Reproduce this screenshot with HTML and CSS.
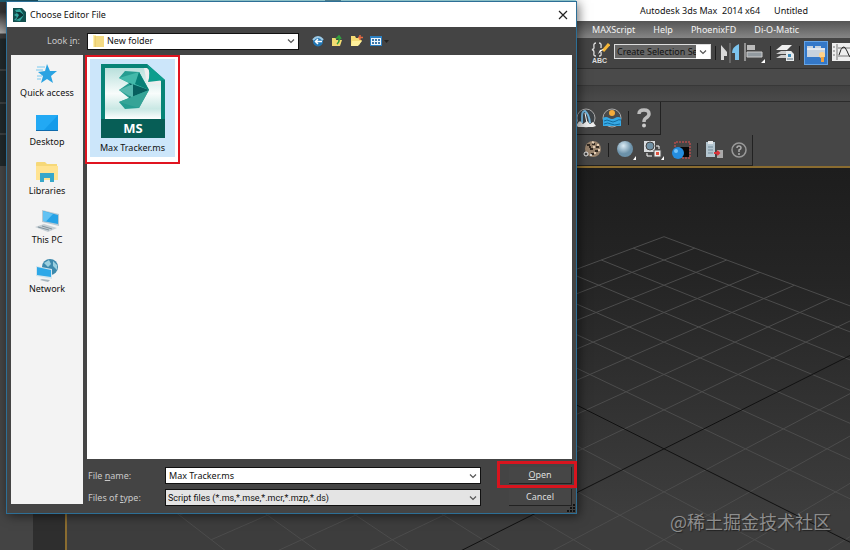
FILE: index.html
```html
<!DOCTYPE html>
<html lang="en">
<head>
<meta charset="utf-8">
<title>Autodesk 3ds Max 2014 x64 - Untitled</title>
<link rel="stylesheet" href="styles.css">
</head>
<body>
<div class="app">
  <header class="titlebar"><span>Autodesk 3ds Max&nbsp; 2014 x64</span><span>Untitled</span></header>
  <nav class="menubar">
    <a href="#">MAXScript</a><a href="#">Help</a><a href="#">PhoenixFD</a><a href="#">Di-O-Matic</a>
  </nav>
  <div class="toolbar">
    <button class="tool" aria-label="Edit named selections"><svg width="20" height="22" viewBox="0 0 20 22"><path d="M6 1C3 1 4 4 4 6Q4 7 2 7.500Q4 8 4 10C4 12 3 14 6 14M9 1C12 1 11 4 11 6M9 14C12 14 11 12 11 10" fill="none" stroke="#ddd" stroke-width="1.300"/><path d="M19 2L13 9" stroke="#f5b638" stroke-width="3"/><path d="M14 7L8 12L10 8Z" fill="#fff"/><text x="2" y="21" class="abc">ABC</text></svg></button>
    <div class="combo set"><select aria-label="Named selection set"><option>Create Selection Se</option></select><svg class="arrow" viewBox="0 0 14 14"><path d="M4 5.500L7 8.500L10 5.500"/></svg></div>
    <i class="sep"></i>
    <button class="tool" aria-label="Mirror"><svg width="20" height="22" viewBox="0 0 20 22"><path d="M1 3L7 10V14H4V18H1Z" fill="#d8d8d8"/><path d="M10 1V21" stroke="#888"/><path d="M19 2Q12 5 12 11H15V18H19Z" fill="#7cc4ee"/></svg></button>
    <button class="tool" aria-label="Align"><svg width="22" height="22" viewBox="0 0 22 22"><path d="M1 1V19" stroke="#ddd"/><path d="M3 3H11V8H3Z" fill="#bbb"/><path d="M3 10H18V15H3Z" fill="#929aa0" stroke="#ccc"/><path d="M21 17V21H17Z" fill="#fff"/></svg></button>
    <i class="sep"></i>
    <button class="tool" aria-label="Layers"><svg width="20" height="22" viewBox="0 0 20 22"><path d="M1 12L6 9H17L12 12ZM1 16L6 13H12V16Z" fill="#ccc"/><path d="M1 8L7 3H17L12 8Z" fill="#eee"/><path d="M11 9H16L19 12V19H11Z" fill="#e5e9eb"/><path d="M13 12H16V15H13Z" fill="#3989b8"/><path d="M12 17H18" stroke="#5b7381"/></svg></button>
    <i class="sep"></i>
    <button class="tool active" aria-label="Ribbon"><svg width="22" height="20" viewBox="0 0 22 20"><path d="M2 5V3H8V5H10V3H16V5H20V14H2Z" fill="#c7d2de"/><path d="M2 6H20" stroke="#fff"/><circle cx="17" cy="12" r="3" fill="#ffd28a"/><path d="M16 14H19V19H16Z" fill="#f2a23c"/></svg></button>
    <button class="tool curve" aria-label="Curve editor"><svg width="20" height="20" viewBox="0 0 20 20"><path d="M0 0H20V18H0Z" fill="#eee"/><path d="M5 1V17M6 13H20M6 5H20M1 4H3M1 8H3M1 12H3" stroke="#777"/><path d="M7 12Q11 -2 15 8T20 13" fill="none" stroke="#222"/></svg></button>
  </div>
  <div class="ribbon"></div>
  <div class="ribbon lower"></div>
  <div class="workspace">
    <div class="dock first">
      <button class="tool" aria-label="Waterfall"><svg width="20" height="20" viewBox="0 0 20 20"><circle cx="10" cy="10" r="9" fill="#3e4347" stroke="#aaa"/><path d="M6 15V8Q6 3 9 3Q13 6 14 15" fill="none" stroke="#75b9e2" stroke-width="2"/><path d="M9 5L11 15" stroke="#fff"/><path d="M0 17L4 13L7 16L11 13L14 16L17 14L20 18L17 19H2Z" fill="#eee"/></svg></button>
      <button class="tool" aria-label="Ocean"><svg width="20" height="20" viewBox="0 0 20 20"><circle cx="10" cy="10" r="9" fill="#4b4b4b" stroke="#aaa"/><circle cx="10" cy="5" r="3" fill="#f4ab3b"/><path d="M1 10Q4 8 7 10T13 10T19 10V18H1Z" fill="#36a9e6"/><path d="M2 13Q5 11 8 13T14 13T19 12M2 16Q6 14 9 16T18 16" fill="none" stroke="#126b9e"/></svg></button>
      <i class="sep"></i>
      <button class="tool" aria-label="Help"><svg width="18" height="20" viewBox="0 0 18 20"><path d="M4 6Q4 2 9 2Q14 2 14 6Q14 8 11 10Q9 11 9 14" fill="none" stroke="#bdbdbd" stroke-width="3.500"/><circle cx="9" cy="17.500" r="2" fill="#ccc"/></svg></button>
    </div>
    <div class="dock second">
      <button class="tool" aria-label="Particles"><svg width="20" height="20" viewBox="0 0 20 20"><circle cx="11" cy="9" r="8" fill="#97826c"/><path d="M5 5H8M10 4H13M14 7H17M8 9H11M13 11H16M9 14H12M7 7H9" stroke="#332a22" stroke-width="2"/><path d="M10 2L12 3M15 5H17M11 7H13M16 10H18M12 13H14" stroke="#e6cfb5" stroke-width="2"/><circle cx="4" cy="14" r="2" fill="#444" stroke="#eee"/><circle cx="9" cy="15" r="1" fill="#eee"/></svg></button>
      <i class="sep"></i>
      <button class="tool" aria-label="Sphere"><svg width="22" height="22" viewBox="0 0 22 22"><defs><radialGradient id="ball" cx=".4" cy=".3"><stop offset="0" stop-color="#dcecf5"/><stop offset="1" stop-color="#6b91a9"/></radialGradient></defs><circle cx="10" cy="10" r="8" fill="url(#ball)"/><path d="M21 17V21H18Z" fill="#fff"/></svg></button>
      <button class="tool" aria-label="Texture swap"><svg width="22" height="22" viewBox="0 0 22 22"><path d="M1 2H12V13H1Z" fill="#d9dcde"/><circle cx="7" cy="7" r="4" fill="#7191a5" stroke="#444"/><path d="M11 11H18V18H11Z" fill="#eee" stroke="#555"/><path d="M13 13H16V16H13Z" fill="#df5441"/><path d="M13 7H16V10M4 14V17H9" fill="none" stroke="#fff"/><path d="M21 17V21H18Z" fill="#fff"/></svg></button>
      <button class="tool" aria-label="Render region"><svg width="20" height="20" viewBox="0 0 20 20"><path d="M9 7H18V17H9Z" fill="#080808"/><path d="M4 7V2H19V18H10" fill="none" stroke="#e65050" stroke-dasharray="2 1"/><circle cx="7" cy="13" r="6" fill="#248de0"/><circle cx="5" cy="11" r="2" fill="#76c4fa"/></svg></button>
      <i class="sep"></i>
      <button class="tool" aria-label="Export"><svg width="20" height="20" viewBox="0 0 20 20"><path d="M2 2H11V17H2Z" fill="#b4c6d0"/><path d="M4 1H9V4H4Z" fill="#e4e8ea"/><path d="M4 7H9M4 10H9M4 13H9" stroke="#718997"/><path d="M13 10H19V18H13Z" fill="#aaa"/><path d="M10 13H15M13 11L15 13L13 15" fill="none" stroke="#d8343b" stroke-width="2"/></svg></button>
      <button class="tool" aria-label="About"><svg width="18" height="18" viewBox="0 0 18 18"><circle cx="9" cy="9" r="7" fill="#484848" stroke="#999" stroke-width="1.500"/><path d="M7 7Q7 5 9 5T11 7Q11 8 9 9V11M9 12V14" fill="none" stroke="#aaa" stroke-width="1.500"/></svg></button>
    </div>
    <div class="stage">
      <div class="panel"></div><div class="rail"></div>
      <main class="viewport"><svg id="grid" viewBox="67 168 783 382" preserveAspectRatio="xMinYMin slice" aria-label="Perspective view"></svg></main>
    </div>
  </div>
  <div class="edge"></div>
  <p class="watermark">@稀土掘金技术社区</p>

  <section class="dialog" role="dialog" aria-labelledby="dialog-title">
    <header class="dialog-title">
      <svg width="14" height="14" viewBox="0 0 14 14"><path d="M1 0H10L14 4V14H1Z" fill="#12504f"/><path d="M3 2L8 1L12 7L8 13L2 12L5 9L2 7L5 5Z" fill="#35a8a0"/><path d="M8 4L12 7L8 10L4 12L7 7L4 4Z" fill="#0c3638"/></svg>
      <h1 id="dialog-title">Choose Editor File</h1>
      <button class="close" aria-label="Close"><svg width="10" height="10" viewBox="0 0 10 10"><path d="M1 1L9 9M9 1L1 9" stroke="#222" stroke-width="1.200"/></svg></button>
    </header>
    <div class="lookin">
      <label for="folder">Look <u>i</u>n:</label>
      <div class="combo folder">
        <select id="folder"><option>New folder</option></select>
        <svg class="folder-icon" width="12" height="14" viewBox="0 0 12 14"><path d="M0 1H3V13H0Z" fill="#fff0ad"/><path d="M2 2H11V13H2Z" fill="#f3da83"/><path d="M2 2V13" stroke="#e3c25f"/></svg>
        <svg class="arrow" viewBox="0 0 14 14"><path d="M4 5.500L7 8.500L10 5.500"/></svg>
      </div>
      <div class="nav-tools">
        <button class="tool" aria-label="Back"><svg width="12" height="12" viewBox="0 0 12 12"><circle cx="6" cy="6.500" r="5" fill="#2377b4"/><path d="M1 5Q6 -1 11 5" fill="none" stroke="#9dcae6" stroke-width="2"/><path d="M10 6.500H4M6 4L3.500 6.500L6 9" fill="none" stroke="#fff" stroke-width="1.500"/></svg></button>
        <button class="tool" aria-label="Up one level"><svg width="12" height="12" viewBox="0 0 12 12"><path d="M1 3H5V11H1ZM5 5H11L9 11H3Z" fill="#f2db72"/><path d="M6 9Q9 7 8 2M5 4L8 1L10 4" fill="none" stroke="#32a03e" stroke-width="1.700"/></svg></button>
        <button class="tool" aria-label="New folder"><svg width="13" height="12" viewBox="0 0 13 12"><path d="M1 1H5L6 3H10V5H12L9 10L1 11Z" fill="#f5dc75"/><path d="M2 6H12L8 11H1Z" fill="#fff09b"/><path d="M10 0V5M8 2.500H13" stroke="#e66a42" stroke-width="1.500"/></svg></button>
        <button class="tool" aria-label="View menu"><svg width="19" height="12" viewBox="0 0 19 12"><path d="M0 1H12V11H0Z" fill="#2b80c3"/><path d="M1 3H11V10H1Z" fill="#eef5fa"/><path d="M2 5H4M5 5H7M8 5H10M2 8H4M5 8H7M8 8H10" stroke="#3d79ac" stroke-width="2"/><path d="M14 5H19L16.500 8Z" fill="#222"/></svg></button>
      </div>
    </div>
    <div class="dialog-body">
      <nav class="places">
        <a href="#"><svg width="22" height="22" viewBox="0 0 22 22"><path d="M11 1L14 8L21 8L15 13L17 20L11 16L5 20L7 13L2 9L9 8Z" fill="#2aa3e2"/><path d="M1 4H9M0 7H7M1 13H6M1 16H5" stroke="#78c9ef"/></svg>Quick access</a>
        <a href="#"><svg width="24" height="22" viewBox="0 0 24 22"><path d="M1 3H23V19H1Z" fill="#149bea"/><path d="M1 3H23L8 19H1Z" fill="#22a9f4"/><path d="M1 18.500H23" stroke="#0f6aac"/></svg>Desktop</a>
        <a href="#"><svg width="24" height="22" viewBox="0 0 24 22"><path d="M1 2Q1 1 2 1H10L12 3H22V19H1Z" fill="#f6d878"/><path d="M1 5H23V19H1Z" fill="#ffe391"/><path d="M5 21V12H19V21H15V17H9V21Z" fill="#36a7ca"/></svg>Libraries</a>
        <a href="#"><svg width="26" height="22" viewBox="0 0 26 22"><path d="M8 0L25 4V16L8 12Z" fill="#b7c8d2"/><path d="M9 1L24 5V14L9 11Z" fill="#26a2e6"/><path d="M9 1L19 4L12 11.500L9 11Z" fill="#62c2f3"/><path d="M1 17L10 14L23 18L14 22Z" fill="#c4ced4"/><path d="M4 17L15 20M8 16L18 19" stroke="#80919b"/></svg>This PC</a>
        <a href="#"><svg width="24" height="23" viewBox="0 0 24 23"><circle cx="15" cy="8" r="8" fill="#3d89ac"/><path d="M9 4L14 1L16 5L13 8ZM18 2L22 6V11L18 7Z" fill="#9bd0df"/><path d="M1 7L17 10V20L1 17Z" fill="#d3e4ec"/><path d="M2 8L16 11V18L2 16Z" fill="#2da8e8"/><path d="M7 20L15 21L13 23L5 21Z" fill="#a8b6bd"/></svg>Network</a>
      </nav>
      <div class="browse">
        <div class="files">
          <button class="file">
            <svg width="64" height="74" viewBox="0 0 64 74"><defs><linearGradient id="page" x2="0" y2="1"><stop offset="0" stop-color="#b8e0dc"/><stop offset=".5" stop-color="#f8fcfb"/><stop offset=".8" stop-color="#c9e8e4"/><stop offset="1" stop-color="#fff"/></linearGradient></defs><path d="M0 0H46L64 16V74H0Z" fill="#078477"/><path d="M4 4H45L60 18V55H4Z" fill="url(#page)"/><path d="M0 55H64V74H0Z" fill="#075e56"/><path d="M43 4L46 19L60 21V17L46 4Z" fill="#eee"/><path d="M46 0L64 16L47 18Q50 9 46 0Z" fill="#0d9e8e"/><path d="M24 7L38 8L48 26L38 44L24 45L18 38L28 34L18 26L28 19L18 14Z" fill="#269d91"/><path d="M18 14L38 8L48 26L28 19Z" fill="#43b9aa"/><path d="M28 19L48 26L28 34L32 26Z" fill="#075f5e"/><path d="M18 26L32 20V34Z" fill="#55b8ae"/><path d="M18 38L48 26L38 44Z" fill="#36a497"/><path d="M38 8L48 26L34 20Z" fill="#078077"/><text x="32" y="69" text-anchor="middle" class="ms">MS</text></svg>
            Max Tracker.ms
          </button>
        </div>
        <div class="fields">
          <label for="name">File <u>n</u>ame:</label>
          <div class="combo"><input id="name" value="Max Tracker.ms"><svg class="arrow" viewBox="0 0 14 14"><path d="M4 5.500L7 8.500L10 5.500"/></svg></div>
          <button class="action"><u>O</u>pen</button>
          <label for="type">Files of <u>t</u>ype:</label>
          <div class="combo type"><select id="type"><option>Script files (*.ms,*.mse,*.mcr,*.mzp,*.ds)</option></select><svg class="arrow" viewBox="0 0 14 14"><path d="M4 5.500L7 8.500L10 5.500"/></svg></div>
          <button class="action">Cancel</button>
        </div>
      </div>
    </div>
    <svg class="grip" width="8" height="8" viewBox="0 0 8 8"><path d="M6 1H8M3 4H5M6 4H8M0 7H2M3 7H5M6 7H8" stroke="#111" stroke-width="2"/></svg>
    <div class="mark mark-open"></div>
  </section>
</div>
<script src="grid.js"></script>
</body>
</html>
```
FILE: grid.js
```js
// Ground plane of 14 x 14 cells, projected in perspective.
const CELLS = 14;
const svg = document.getElementById("grid");

function project(i, j) {
  const depth = 1 - 0.0185 * (i + j);
  return [664 + 30.2 * (i - j) / depth, (236.7 + 6.85 * (i + j)) / depth];
}

function line(a, b, axis) {
  const el = document.createElementNS("http://www.w3.org/2000/svg", "line");
  el.setAttribute("x1", a[0]);
  el.setAttribute("y1", a[1]);
  el.setAttribute("x2", b[0]);
  el.setAttribute("y2", b[1]);
  el.setAttribute("class", axis ? "axis" : "cell");
  svg.append(el);
}

const order = [...Array(CELLS + 1).keys()].filter(k => k !== CELLS / 2);
order.push(CELLS / 2);
for (const k of order) {
  line(project(k, 0), project(k, CELLS), k === CELLS / 2);
  line(project(0, k), project(CELLS, k), k === CELLS / 2);
}
```
FILE: styles.css
```css
* { box-sizing: border-box; }
body {
  margin: 0;
  background: #444;
  font: 9px/14px "Noto Sans", "Noto Sans CJK SC", sans-serif;
}
button, input, select { font: inherit; border: 0; margin: 0; padding: 0; border-radius: 0; }
a { color: inherit; text-decoration: none; }
svg { display: block; flex: none; }
.app { position: relative; display: flex; flex-direction: column; min-height: 100vh; overflow: hidden; }
.titlebar {
  display: flex; gap: 14px; height: 21px; padding-left: 640px;
  align-items: center; color: #111; white-space: nowrap;
  background: linear-gradient(90deg, #1f5d70 38px, #a9e8f0 38px 325px, #5c97aa 325px 341px, #a9e8f0 341px 576px, #fff 576px);
}
.menubar {
  display: flex; gap: 18px; height: 17px; padding-left: 592px; align-items: center;
  background: linear-gradient(#555, #858585); color: #f4f4f4; white-space: nowrap;
}
.toolbar {
  display: flex; align-items: center; gap: 4px; height: 31px; padding-left: 590px;
  background: #444; border-bottom: 1px solid #303030;
}
.tool { display: flex; align-items: center; background: none; flex: none; }
.active { background: #3478c8; border: 1px solid #65a4e6; width: 24px; height: 24px; }
.sep { width: 1px; height: 14px; background: #1c1c1c; flex: none; }
.abc { font: bold 7px "Liberation Sans", sans-serif; fill: #ddd; }
.ribbon { height: 17px; background: #4a4a4a; border-bottom: 1px solid #383838; }
.lower { height: 16px; background: linear-gradient(#414141, #4a4a4a); border-color: #2b2b2b; }
.workspace { flex: 1; display: flex; flex-direction: column; align-items: flex-start; background: #464646; }
.dock {
  display: flex; align-items: center;
  border: 1px solid #222; border-left: 0; border-top: 0;
}
.first { height: 33px; gap: 6px; padding: 0 7px 0 576px; }
.second { height: 31px; gap: 6px; padding: 0 4px 0 582px; }
.stage { flex: 1; display: flex; align-self: stretch; }
.panel { width: 33px; background: #444; }
.rail { width: 32px; background: #2e2e2e; }
.viewport {
  position: relative; flex: 1; overflow: hidden; border-top: 2px solid #8a6c30; border-left: 2px solid #8a6c30;
  background: linear-gradient(#1d1d1d, #252525 30%, #3d3d3d 90%);
}
.viewport svg { position: absolute; width: 100%; height: 100%; }
.cell { stroke: #4c4c4c; stroke-width: 1; }
.axis { stroke: #111; stroke-width: 1; }
.edge {
  position: absolute; left: 0; top: 2px; width: 6px; height: 164px;
  background: linear-gradient(#333 10px, #aaa 31px, #3a3a3a 32px 36px, #20282a 37px 67px, #555 68px, #20282a 69px 100px, #555 101px, #20282a 102px 131px, #555 132px, #20282a 133px);
}
.watermark {
  position: absolute; right: 19px; bottom: 16px; margin: 0;
  font: 18px/26px "Noto Sans CJK SC", sans-serif; color: #8d8d8d; text-shadow: 1px 1px 1px #222;
}

.combo {
  display: grid; grid-template-columns: 1fr 14px; align-items: center;
  height: 17px; border: 1px solid #111; background: #fff; color: #111;
}
.combo select, .combo input {
  grid-area: 1 / 1 / 2 / 3; width: 100%; height: 100%; padding: 0 16px 0 3px;
  appearance: none; background: transparent; color: inherit; outline: 0;
}
.arrow { grid-area: 1 / 2; width: 14px; height: 14px; pointer-events: none; }
.arrow path { fill: none; stroke: #555; stroke-width: 1.2; }
.set { flex: none; width: 97px; height: 15px; margin-bottom: 4px; background: #666; border-color: #ddd; }
.set select { padding: 0 0 0 2px; }
.set .arrow { height: 100%; background: #fff; }
.type { background: #e4e4e4; font-family: Roboto, sans-serif; }
.type select { padding-left: 2px; }

.dialog {
  position: absolute; left: 6px; top: 1px; width: 571px; height: 513px;
  display: flex; flex-direction: column;
  background: #444; border: 1px solid #2d6f96; box-shadow: 2px 2px 10px #0008;
}
.dialog-title { display: flex; align-items: center; gap: 4px; height: 25px; padding: 0 8px 0 5px; background: #fff; }
.dialog-title h1 { flex: 1; margin: 0; font-size: 9px; font-weight: 400; color: #111; }
.close { background: none; }
.lookin { display: flex; align-items: center; height: 28px; color: #c8c8c8; }
.lookin label { width: 80px; padding-right: 7px; text-align: right; }
.folder { width: 212px; }
.folder select { padding-left: 19px; }
.folder-icon { grid-area: 1 / 1; margin-left: 5px; pointer-events: none; }
.nav-tools { display: flex; gap: 7px; margin-left: 13px; }
.dialog-body { flex: 1; display: flex; gap: 4px; padding: 0 4px 7px; }
.places {
  width: 72px; display: flex; flex-direction: column; gap: 12px;
  margin-bottom: 2px; padding-top: 8px; background: #f3f3f3; color: #111;
}
.places a { display: flex; flex-direction: column; align-items: center; height: 37px; justify-content: space-between; }
.browse { flex: 1; display: flex; flex-direction: column; }
.files { position: relative; flex: 1; background: #fff; }
.file {
  display: flex; flex-direction: column; align-items: center; gap: 3px;
  width: 95px; height: 109px; padding-top: 7px; color: #111;
  border: 2px solid #e01420; margin-left: -2px;
  background: linear-gradient(#cce6fa, #cce6fa) 3px 2px / 85px 98px no-repeat #fff;
}
.ms { font: bold 13px "Noto Sans", sans-serif; fill: #fff; }
.fields {
  display: grid; grid-template-columns: 78px 316px 1fr; row-gap: 5px;
  padding-top: 8px; align-items: center; color: #c8c8c8;
}
.fields label { padding-left: 1px; }
.action {
  height: 17px; margin-left: 28px; color: #ddd; background: #464646;
  border-right: 1px solid #222; border-bottom: 1px solid #222;
}
.grip { position: absolute; right: 1px; bottom: 1px; }
.mark { position: absolute; border: 3px solid #d8141e; pointer-events: none; }
.mark-open { left: 490px; top: 459px; width: 80px; height: 27px; }
```
